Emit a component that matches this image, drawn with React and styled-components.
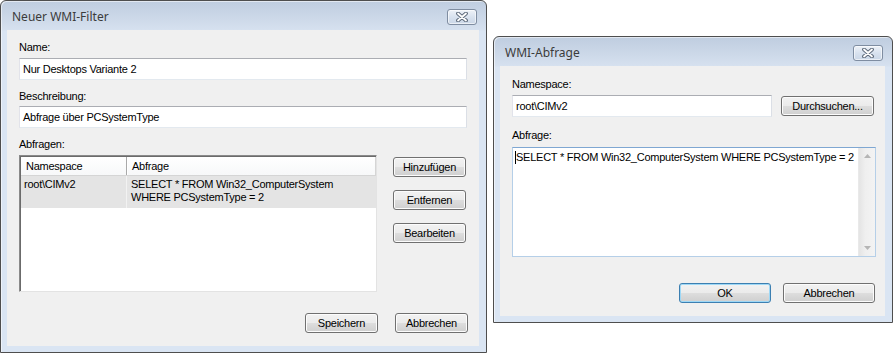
import React from 'react';
import styled, { createGlobalStyle } from 'styled-components';

const GlobalStyle = createGlobalStyle`
  html, body {
    margin: 0;
    padding: 0;
    background: #ffffff;
  }
  body {
    font-family: "Liberation Sans", Arial, sans-serif;
    font-size: 11px;
    letter-spacing: -0.25px;
    color: #000;
  }
`;

const Page = styled.div`
  display: flex;
  align-items: flex-start;
  gap: 6px;
  width: 895px;
  height: 353px;
  overflow: hidden;
`;

const Window = styled.div`
  box-sizing: border-box;
  width: ${(p) => p.$w}px;
  height: ${(p) => p.$h}px;
  margin-top: ${(p) => p.$top || 0}px;
  display: flex;
  flex-direction: column;
  padding: 0 7px 6px 6px;
  border: 1px solid #4e4e4e;
  border-radius: 6px 6px 0 0;
  background: linear-gradient(#bfcde0 0px, #cdd9e9 18px, #d6e1ef 29px, #dae5f3 30px);
  box-shadow: inset 1px 1px 0 rgba(255, 255, 255, 0.55);
`;

const TitleBar = styled.div`
  height: 29px;
  flex: none;
  display: flex;
  align-items: center;
  justify-content: space-between;
  padding: 0 2px 0 5px;
`;

const Title = styled.span`
  font-family: "Noto Sans", "Open Sans", sans-serif;
  font-size: 12px;
  letter-spacing: 0;
  color: #3b3b3b;
  margin-top: 1px;
`;

const CloseBtn = styled.div`
  box-sizing: border-box;
  width: 30px;
  height: 16px;
  margin-top: 3px;
  display: flex;
  align-items: center;
  justify-content: center;
  border: 1px solid #7f8da1;
  border-radius: 3px;
  background: linear-gradient(#eef2f8, #d7e1ee 55%, #cbd7e7);
  box-shadow: inset 0 0 0 1px rgba(255, 255, 255, 0.6);
`;

const Client = styled.div`
  flex: 1;
  display: flex;
  flex-direction: column;
  background: #f0f0f0;
  padding: ${(p) => p.$pad};
  box-sizing: border-box;
`;

const Label = styled.div`
  line-height: 13px;
  height: 13px;
  margin-top: ${(p) => p.$mt || 0}px;
  white-space: nowrap;
`;

const TextBox = styled.div`
  box-sizing: border-box;
  width: ${(p) => p.$w}px;
  height: 22px;
  margin-top: ${(p) => p.$mt || 0}px;
  padding: 0 3px;
  display: flex;
  align-items: center;
  background: #fff;
  border: 1px solid;
  border-color: #abadb3 #dbdfe6 #e3e9ef #e2e3ea;
  white-space: nowrap;
`;

const Button = styled.div`
  box-sizing: border-box;
  width: ${(p) => p.$w || 73}px;
  height: 20px;
  flex: none;
  display: flex;
  align-items: center;
  justify-content: center;
  border: 1px solid ${(p) => (p.$default ? '#3c7fb1' : '#707070')};
  border-radius: 3px;
  background: linear-gradient(#f2f2f2 0%, #ebebeb 48%, #dddddd 52%, #cfcfcf 100%);
  box-shadow: inset 0 0 0 1px ${(p) => (p.$default ? '#9ed8f6' : '#fcfcfc')};
  white-space: nowrap;
`;

const ListRow = styled.div`
  display: flex;
  align-items: flex-start;
  gap: 16px;
  margin-top: 4px;
`;

const ListView = styled.div`
  box-sizing: border-box;
  width: 358px;
  height: 137px;
  background: #fff;
  border: 1px solid;
  border-color: #8a8a8a #e3e3e3 #e3e3e3 #8a8a8a;
  box-shadow: inset 1px 1px 0 #6b6b6b;
  padding: 1px 0 0 1px;
`;

const HeaderRow = styled.div`
  display: flex;
  height: 19px;
  width: 355px;
  box-sizing: border-box;
  border-bottom: 1px solid #d5d5d5;
  border-right: 1px solid #d5d5d5;
  background: linear-gradient(#ffffff, #f7f8f9);
`;

const HeaderCell = styled.div`
  box-sizing: border-box;
  width: ${(p) => p.$w}px;
  flex: ${(p) => (p.$w ? 'none' : 1)};
  padding-left: 5px;
  line-height: 18px;
  border-right: ${(p) => (p.$w ? '1px solid #a9a9a9' : 'none')};
  box-shadow: ${(p) => (p.$w ? '1px 0 0 #ffffff' : 'none')};
`;

const DataRow = styled.div`
  display: flex;
  width: 355px;
  height: 32px;
  background: #e4e4e4;
`;

const DataCell = styled.div`
  box-sizing: border-box;
  width: ${(p) => p.$w}px;
  flex: ${(p) => (p.$w ? 'none' : 1)};
  padding: 2px 0 0 ${(p) => (p.$w ? 3 : 4)}px;
  line-height: 13px;
  border-right: ${(p) => (p.$w ? '1px solid #f2f2f2' : 'none')};
`;

const ButtonColumn = styled.div`
  display: flex;
  flex-direction: column;
  gap: 13px;
  margin-top: 2px;
`;

const Footer = styled.div`
  margin-top: auto;
  display: flex;
  justify-content: flex-end;
  gap: ${(p) => p.$gap}px;
  padding-right: ${(p) => p.$pr || 0}px;
`;

const InlineRow = styled.div`
  display: flex;
  align-items: center;
  gap: 9px;
  margin-top: 4px;
`;

const Memo = styled.div`
  box-sizing: border-box;
  width: 364px;
  height: 110px;
  margin-top: 5px;
  display: flex;
  background: #fff;
  border: 1px solid;
  border-color: #7fa7d2 #b5cfe8 #b5cfe8 #b5cfe8;
`;

const MemoText = styled.div`
  flex: 1;
  padding: 3px 0 0 2px;
  line-height: 13px;
  white-space: nowrap;
`;

const Caret = styled.span`
  display: inline-block;
  width: 1px;
  height: 13px;
  background: #000;
  vertical-align: top;
`;

const ScrollBar = styled.div`
  width: 17px;
  flex: none;
  display: flex;
  flex-direction: column;
  justify-content: space-between;
  align-items: center;
  padding: 6px 0;
  box-sizing: border-box;
  background: linear-gradient(90deg, #e4e4e4, #efefef 40%, #f3f3f3);
  border-left: 1px solid #e9e9e9;
`;

const CloseGlyph = () => (
  <svg width="12" height="10" viewBox="0 0 12 10">
    <path d="M2 1.5 L10 8.5 M10 1.5 L2 8.5" stroke="#5f6b7c" strokeWidth="3.8" strokeLinecap="round" />
    <path d="M2 1.5 L10 8.5 M10 1.5 L2 8.5" stroke="#ffffff" strokeWidth="1.8" strokeLinecap="round" />
  </svg>
);

const Arrow = ({ down }) => (
  <svg width="7" height="4" viewBox="0 0 7 4">
    <path d={down ? 'M0 0 L7 0 L3.5 4 Z' : 'M0 4 L7 4 L3.5 0 Z'} fill="#b5b5b5" />
  </svg>
);

const WindowFrame = ({ title, w, h, top, pad, children }) => (
  <Window $w={w} $h={h} $top={top}>
    <TitleBar>
      <Title>{title}</Title>
      <CloseBtn>
        <CloseGlyph />
      </CloseBtn>
    </TitleBar>
    <Client $pad={pad}>{children}</Client>
  </Window>
);

const App = () => {
  return (
    <>
      <GlobalStyle />
      <Page>
        <WindowFrame title="Neuer WMI-Filter" w={487} h={353} pad="11px 11px 13px 12px">
          <Label>Name:</Label>
          <TextBox $w={448} $mt={4}>Nur Desktops Variante 2</TextBox>
          <Label $mt={10}>Beschreibung:</Label>
          <TextBox $w={448} $mt={3}>Abfrage über PCSystemType</TextBox>
          <Label $mt={10}>Abfragen:</Label>
          <ListRow>
            <ListView>
              <HeaderRow>
                <HeaderCell $w={106}>Namespace</HeaderCell>
                <HeaderCell>Abfrage</HeaderCell>
              </HeaderRow>
              <DataRow>
                <DataCell $w={106}>root\CIMv2</DataCell>
                <DataCell>
                  SELECT * FROM Win32_ComputerSystem
                  <br />
                  WHERE PCSystemType = 2
                </DataCell>
              </DataRow>
            </ListView>
            <ButtonColumn>
              <Button>Hinzufügen</Button>
              <Button>Entfernen</Button>
              <Button>Bearbeiten</Button>
            </ButtonColumn>
          </ListRow>
          <Footer $gap={17}>
            <Button>Speichern</Button>
            <Button>Abbrechen</Button>
          </Footer>
        </WindowFrame>

        <WindowFrame title="WMI-Abfrage" w={400} h={287} top={36} pad="12px 9px 13px 12px">
          <Label>Namespace:</Label>
          <InlineRow>
            <TextBox $w={260}>root\CIMv2</TextBox>
            <Button $w={93}>Durchsuchen...</Button>
          </InlineRow>
          <Label $mt={12}>Abfrage:</Label>
          <Memo>
            <MemoText>
              <Caret />
              SELECT * FROM Win32_ComputerSystem WHERE PCSystemType = 2
            </MemoText>
            <ScrollBar>
              <Arrow />
              <Arrow down />
            </ScrollBar>
          </Memo>
          <Footer $gap={12} $pr={1}>
            <Button $w={92} $default>
              OK
            </Button>
            <Button $w={92}>Abbrechen</Button>
          </Footer>
        </WindowFrame>
      </Page>
    </>
  );
};

export default App;
